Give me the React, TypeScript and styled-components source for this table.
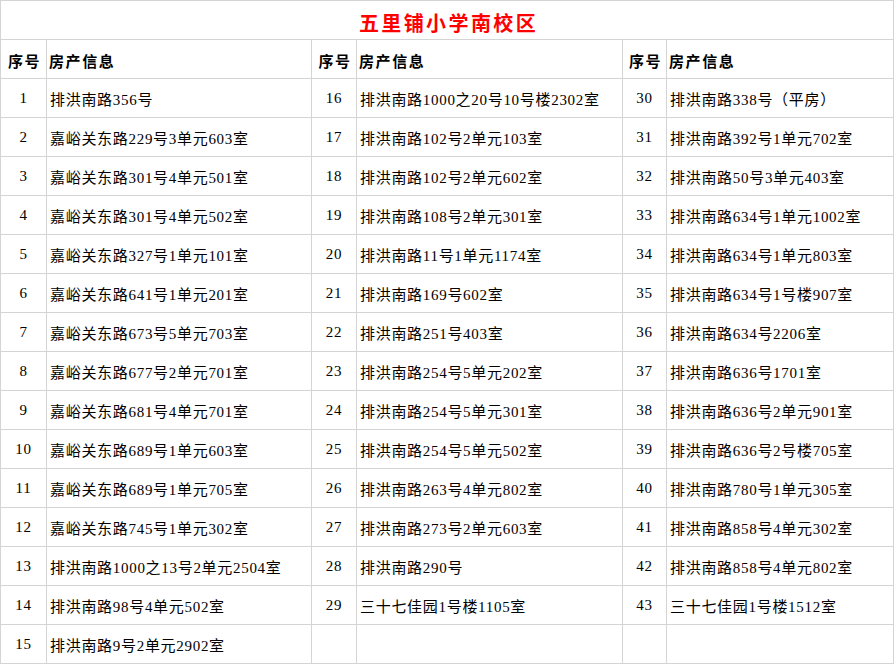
import React from "react";
import styled, { createGlobalStyle } from "styled-components";

const GlobalStyle = createGlobalStyle`
  html, body {
    margin: 0;
    padding: 0;
    background: #ffffff;
  }
  body {
    font-family: "Liberation Serif", "Noto Sans CJK SC", serif;
  }
`;

const LINE = "#d4d4d4";

const Sheet = styled.div`
  display: grid;
  grid-template-columns: 46px 265px 45px 266px 44px 227px;
  grid-auto-rows: 39px;
  width: 894px;
  border-left: 1px solid ${LINE};
  border-top: 1px solid ${LINE};
  box-sizing: border-box;
  background: #fff;
`;

const Cell = styled.div<{ $center?: boolean }>`
  display: flex;
  align-items: center;
  justify-content: ${(p) => (p.$center ? "center" : "flex-start")};
  padding: 1px 0 0 ${(p) => (p.$center ? "0" : "3px")};
  border-right: 1px solid ${LINE};
  border-bottom: 1px solid ${LINE};
  box-sizing: border-box;
  white-space: nowrap;
  overflow: hidden;
  font-family: "Liberation Serif", "Noto Sans CJK SC", serif;
  font-size: 15px;
  letter-spacing: 0.7px;
  color: #000;
`;

const TitleCell = styled(Cell)`
  grid-column: 1 / -1;
  justify-content: center;
  padding: 4px 0 0 3px;
  font-family: "Noto Sans CJK SC", sans-serif;
  font-size: 20px;
  font-weight: 700;
  letter-spacing: 2.4px;
  color: #ff0000;
`;

const HeadCell = styled(Cell)`
  padding-top: 3px;
  padding-left: 2px;
  font-family: "Noto Sans CJK SC", sans-serif;
  font-weight: 700;
  letter-spacing: 1.6px;
`;

const groups: string[][] = [
  [
    "排洪南路356号",
    "嘉峪关东路229号3单元603室",
    "嘉峪关东路301号4单元501室",
    "嘉峪关东路301号4单元502室",
    "嘉峪关东路327号1单元101室",
    "嘉峪关东路641号1单元201室",
    "嘉峪关东路673号5单元703室",
    "嘉峪关东路677号2单元701室",
    "嘉峪关东路681号4单元701室",
    "嘉峪关东路689号1单元603室",
    "嘉峪关东路689号1单元705室",
    "嘉峪关东路745号1单元302室",
    "排洪南路1000之13号2单元2504室",
    "排洪南路98号4单元502室",
    "排洪南路9号2单元2902室",
  ],
  [
    "排洪南路1000之20号10号楼2302室",
    "排洪南路102号2单元103室",
    "排洪南路102号2单元602室",
    "排洪南路108号2单元301室",
    "排洪南路11号1单元1174室",
    "排洪南路169号602室",
    "排洪南路251号403室",
    "排洪南路254号5单元202室",
    "排洪南路254号5单元301室",
    "排洪南路254号5单元502室",
    "排洪南路263号4单元802室",
    "排洪南路273号2单元603室",
    "排洪南路290号",
    "三十七佳园1号楼1105室",
  ],
  [
    "排洪南路338号（平房）",
    "排洪南路392号1单元702室",
    "排洪南路50号3单元403室",
    "排洪南路634号1单元1002室",
    "排洪南路634号1单元803室",
    "排洪南路634号1号楼907室",
    "排洪南路634号2206室",
    "排洪南路636号1701室",
    "排洪南路636号2单元901室",
    "排洪南路636号2号楼705室",
    "排洪南路780号1单元305室",
    "排洪南路858号4单元302室",
    "排洪南路858号4单元802室",
    "三十七佳园1号楼1512室",
  ],
];

const starts = [1, 16, 30];

export default function App() {
  const rows = Array.from({ length: 15 }, (_, i) => i);

  return (
    <>
      <GlobalStyle />
      <Sheet>
        <TitleCell>五里铺小学南校区</TitleCell>
        {groups.map((_, g) => (
          <React.Fragment key={`h${g}`}>
            <HeadCell $center>序号</HeadCell>
            <HeadCell>房产信息</HeadCell>
          </React.Fragment>
        ))}
        {rows.map((i) =>
          groups.map((list, g) => {
            const text = list[i];
            return (
              <React.Fragment key={`${i}-${g}`}>
                <Cell $center>{text ? starts[g] + i : ""}</Cell>
                <Cell>{text ?? ""}</Cell>
              </React.Fragment>
            );
          })
        )}
      </Sheet>
    </>
  );
}
